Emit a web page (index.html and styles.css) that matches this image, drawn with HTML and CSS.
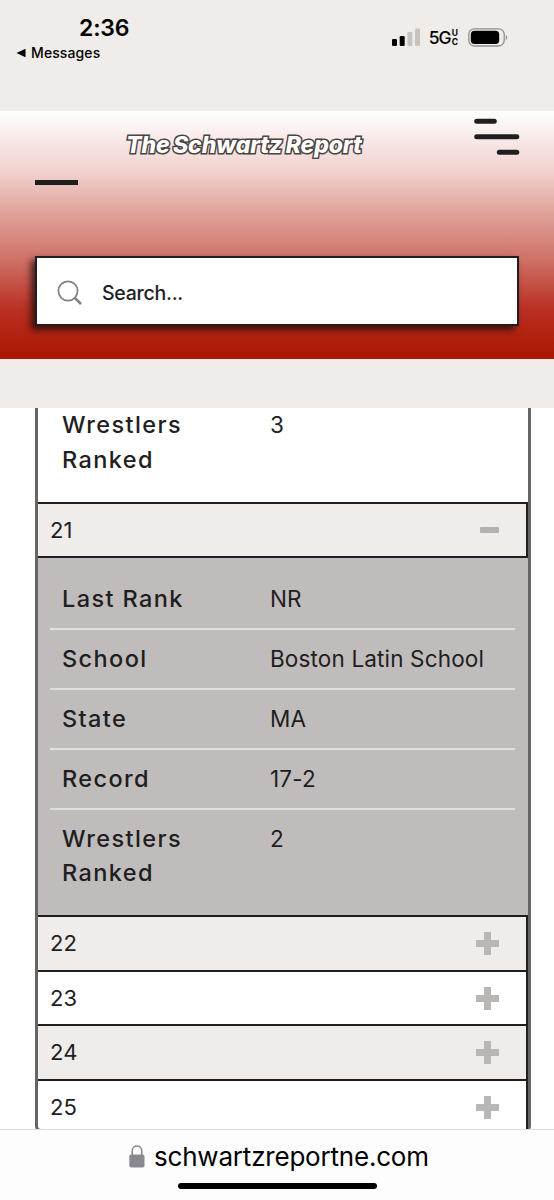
FILE: index.html
```
<!DOCTYPE html>
<html lang="en">
<head>
    <meta charset="UTF-8">
    <meta name="viewport" content="width=device-width, initial-scale=1.0">
    <title>The Schwartz Report</title>
    <link rel="stylesheet" href="styles.css">
</head>
<body>
    <div class="status-bar">
        <div class="status-left">
            <div class="time">2:36</div>
            <div class="back">
                <svg width="10" height="10" viewBox="0 0 10 10"><path d="M0.5 5 L9.5 0.8 V9.2 Z"/></svg>
                <span>Messages</span>
            </div>
        </div>
        <div class="status-right">
            <svg width="28" height="18" viewBox="0 0 28 18">
                <rect x="0" y="11" width="5" height="7" rx="1.3"/>
                <rect x="7.7" y="8" width="5" height="10" rx="1.3"/>
                <rect class="dim" x="15.4" y="4" width="5" height="14" rx="1.3"/>
                <rect class="dim" x="23" y="0.5" width="5" height="17.5" rx="1.3"/>
            </svg>
            <span class="network">5G</span>
            <span class="network-sub"><span>U</span><span>C</span></span>
            <svg class="battery" width="41" height="19" viewBox="0 0 41 19">
                <rect x="0.8" y="0.8" width="35.4" height="17.2" rx="5.5" fill="none" stroke="#918e8d" stroke-width="1.3"/>
                <rect x="2.8" y="2.8" width="28.4" height="13.2" rx="3.8"/>
                <path d="M37.8 6.5 Q40.6 9.4 37.8 12.4 Z" fill="#918e8d"/>
            </svg>
        </div>
    </div>

    <header>
        <div class="title-row">
            <h1>The Schwartz Report</h1>
            <svg class="menu" width="46" height="38" viewBox="0 0 46 38">
                <path d="M2.7 3.3 H20.3 M2.7 18.7 H42.8 M25.3 34.3 H42.8"/>
            </svg>
        </div>
        <div class="dash"></div>
        <div class="search">
            <svg width="26" height="26" viewBox="0 0 26 26">
                <circle cx="11" cy="11" r="9.6"/>
                <path class="handle" d="M17.8 17.8 L24 24"/>
            </svg>
            <span>Search...</span>
        </div>
    </header>

    <div class="band"></div>

    <main>
        <div class="table">
            <div class="details top">
                <div class="field"><b>Wrestlers Ranked</b><span>3</span></div>
            </div>
            <div class="row shaded"><span>21</span><i class="minus"></i></div>
            <div class="details open">
                <div class="field"><b>Last Rank</b><span>NR</span></div>
                <div class="field"><b>School</b><span>Boston Latin School</span></div>
                <div class="field"><b>State</b><span>MA</span></div>
                <div class="field"><b>Record</b><span>17-2</span></div>
                <div class="field"><b>Wrestlers Ranked</b><span>2</span></div>
            </div>
            <div class="row shaded"><span>22</span><i class="plus"></i></div>
            <div class="row"><span>23</span><i class="plus"></i></div>
            <div class="row shaded"><span>24</span><i class="plus"></i></div>
            <div class="row"><span>25</span><i class="plus"></i></div>
        </div>
    </main>

    <footer>
        <div class="address">
            <svg width="16" height="23" viewBox="0 0 16 23">
                <path d="M3.2 11 V6 C3.2 -0.6 12.8 -0.6 12.8 6 V11" fill="none" stroke="#8a8991" stroke-width="1.6"/>
                <rect x="0.3" y="9.5" width="15.2" height="13" rx="2" fill="#8a8991"/>
            </svg>
            <span>schwartzreportne.com</span>
        </div>
        <div class="home-bar"></div>
    </footer>
</body>
</html>
```

FILE: styles.css
```
:root {
    --ink: #201e1f;
    --beige: #f0ecea;
    --grey: #c0bcbb;
    --frame: #656565;
}

* {
    box-sizing: border-box;
}

body {
    margin: 0;
    height: 1200px;
    overflow: hidden;
    display: flex;
    flex-direction: column;
    background: #fff;
    color: var(--ink);
    font-family: Inter, "Liberation Sans", sans-serif;
}

svg {
    display: block;
    flex: none;
}

.status-bar {
    height: 111px;
    background: var(--beige);
    color: #000;
    display: flex;
    justify-content: space-between;
    padding: 14px 45px 0 16px;
}

.time {
    padding-left: 63px;
    font-size: 23px;
    line-height: 28px;
    font-weight: 600;
    letter-spacing: -0.2px;
}

.back {
    display: flex;
    align-items: center;
    gap: 5px;
    margin-top: 2px;
    font-size: 14px;
    line-height: 18px;
    font-weight: 500;
    letter-spacing: 0.1px;
}

.status-right {
    display: flex;
    align-items: center;
    height: 46px;
}

.dim {
    fill: #c5c2c0;
}

.network {
    margin-left: 9px;
    font-size: 17.5px;
    line-height: 18px;
    font-weight: 500;
    letter-spacing: -1px;
    padding: 2px 1px 0 0;
}

.network-sub {
    display: flex;
    flex-direction: column;
    padding-top: 1px;
    font-size: 8.5px;
    line-height: 9px;
    font-weight: 700;
}

.battery {
    margin-left: 10px;
}

header {
    height: 248px;
    padding: 7px 34px 0 35px;
    background: linear-gradient(#fff 0%, #f0d0cd 25%, #dfa098 42%, #cf7167 60%, #b93022 80%, #ab1500 100%);
}

.title-row {
    display: flex;
    justify-content: space-between;
    height: 62px;
}

h1 {
    margin: 10px 0 0 91px;
    font-size: 23px;
    line-height: 34px;
    font-weight: 800;
    font-style: italic;
    letter-spacing: -0.1px;
    word-spacing: -1.5px;
    white-space: nowrap;
    color: #fff;
    -webkit-text-stroke: 3px #4a4243;
    paint-order: stroke fill;
}

.menu {
    fill: none;
    stroke: var(--ink);
    stroke-width: 5;
    stroke-linecap: round;
}

.dash {
    width: 43px;
    height: 5px;
    background: var(--ink);
}

.search {
    display: flex;
    align-items: center;
    gap: 19px;
    width: 484px;
    height: 70px;
    margin-top: 71px;
    padding: 3px 0 0 20px;
    border: 2px solid var(--ink);
    background: #fff;
    box-shadow: -4px 4px 7px rgba(20, 10, 10, 0.75);
    font-size: 19.5px;
    font-weight: 500;
    letter-spacing: -0.25px;
}

.search svg {
    fill: none;
    stroke: #808080;
    stroke-width: 1.7;
}

.search .handle {
    stroke-width: 2.6;
}

.band {
    height: 49px;
    background: var(--beige);
}

main {
    height: 721px;
    padding: 0 23px 0 35px;
    overflow: hidden;
}

.table {
    height: 724px;
    border: solid var(--frame);
    border-width: 0 3px 3px;
    border-radius: 0 0 6px 6px;
    font-size: 22.5px;
    line-height: 34.5px;
    letter-spacing: 0.15px;
}

.details {
    padding: 12px 13px 12px 12px;
}

.details.top {
    height: 94px;
    padding-top: 0;
}

.details.open {
    height: 357px;
    background: var(--grey);
}

.field {
    display: grid;
    grid-template-columns: 208px 1fr;
    height: 60px;
    padding: 11.5px 0 0 12px;
    border-bottom: 2px solid #e2dfde;
}

.field b {
    width: 140px;
    font-size: 23.5px;
    font-weight: 500;
    letter-spacing: 1.4px;
}

.field:last-child {
    border-bottom: none;
}

.top .field {
    padding-top: 0;
}

.row {
    display: flex;
    align-items: center;
    justify-content: space-between;
    height: 56.7px;
    margin-bottom: -2px;
    padding: 0 27px 0 12px;
    border: solid var(--ink);
    border-width: 2px 2px 2px 0;
    font-size: 22px;
}

.row:nth-child(2) {
    height: 56px;
    margin-bottom: 0;
}

.shaded {
    background: var(--beige);
}

.minus {
    width: 19px;
    height: 6px;
    border-radius: 1px;
    background: #b3b1b0;
}

/* two crossed bars, drawn as background layers */
.plus {
    width: 23px;
    height: 23px;
    background:
        linear-gradient(#b8b7b6, #b8b7b6) center / 23px 7px no-repeat,
        linear-gradient(#b8b7b6, #b8b7b6) center / 7px 23px no-repeat;
}

footer {
    height: 71px;
    border-top: 1px solid #dedede;
    background: #fdfdfd;
    color: #000;
}

.address {
    display: flex;
    align-items: center;
    gap: 9px;
    height: 53px;
    padding-left: 129px;
    font-size: 26px;
    letter-spacing: -0.2px;
}

.home-bar {
    width: 199px;
    height: 6px;
    margin: 0 0 0 178px;
    border-radius: 3px;
    background: #000;
}
```
